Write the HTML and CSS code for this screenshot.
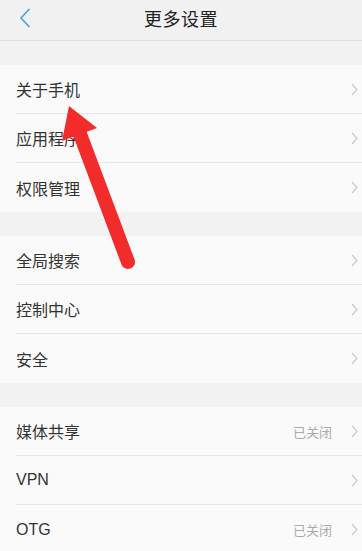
FILE: index.html
```html
<!DOCTYPE html>
<html lang="zh-CN">
<head>
    <meta charset="UTF-8">
    <meta name="viewport" content="width=device-width, initial-scale=1.0">
    <title>更多设置</title>
    <link rel="stylesheet" href="styles.css">
</head>
<body>
    <div class="page">
        <div class="header">
            <svg class="back" width="12" height="20" viewBox="0 0 12 20">
                <path d="M10.5 1 L2 10 L10.5 19" fill="none" stroke="#4f9fe3" stroke-width="1.6"/>
            </svg>
            <div class="title">更多设置</div>
        </div>

        <div class="group">
            <div class="row"><span class="label">关于手机</span><svg class="chevron" width="7" height="13" viewBox="0 0 7 13"><path d="M1 1 L6 6.5 L1 12" fill="none" stroke="#c9c9c9" stroke-width="1.2"/></svg></div>
            <div class="row"><span class="label">应用程序</span><svg class="chevron" width="7" height="13" viewBox="0 0 7 13"><path d="M1 1 L6 6.5 L1 12" fill="none" stroke="#c9c9c9" stroke-width="1.2"/></svg></div>
            <div class="row"><span class="label">权限管理</span><svg class="chevron" width="7" height="13" viewBox="0 0 7 13"><path d="M1 1 L6 6.5 L1 12" fill="none" stroke="#c9c9c9" stroke-width="1.2"/></svg></div>
        </div>

        <div class="group">
            <div class="row"><span class="label">全局搜索</span><svg class="chevron" width="7" height="13" viewBox="0 0 7 13"><path d="M1 1 L6 6.5 L1 12" fill="none" stroke="#c9c9c9" stroke-width="1.2"/></svg></div>
            <div class="row"><span class="label">控制中心</span><svg class="chevron" width="7" height="13" viewBox="0 0 7 13"><path d="M1 1 L6 6.5 L1 12" fill="none" stroke="#c9c9c9" stroke-width="1.2"/></svg></div>
            <div class="row"><span class="label">安全</span><svg class="chevron" width="7" height="13" viewBox="0 0 7 13"><path d="M1 1 L6 6.5 L1 12" fill="none" stroke="#c9c9c9" stroke-width="1.2"/></svg></div>
        </div>

        <div class="group">
            <div class="row"><span class="label">媒体共享</span><span class="value">已关闭</span><svg class="chevron" width="7" height="13" viewBox="0 0 7 13"><path d="M1 1 L6 6.5 L1 12" fill="none" stroke="#c9c9c9" stroke-width="1.2"/></svg></div>
            <div class="row"><span class="label latin">VPN</span><svg class="chevron" width="7" height="13" viewBox="0 0 7 13"><path d="M1 1 L6 6.5 L1 12" fill="none" stroke="#c9c9c9" stroke-width="1.2"/></svg></div>
            <div class="row"><span class="label latin">OTG</span><span class="value">已关闭</span><svg class="chevron" width="7" height="13" viewBox="0 0 7 13"><path d="M1 1 L6 6.5 L1 12" fill="none" stroke="#c9c9c9" stroke-width="1.2"/></svg></div>
        </div>

        <!-- red pointer drawn over the list -->
        <svg class="pointer" width="362" height="551" viewBox="0 0 362 551">
            <line x1="80" y1="134" x2="128" y2="262" stroke="#f22b2b" stroke-width="14" stroke-linecap="round"/>
            <polygon points="69,106 97,128 62,141" fill="#f22b2b"/>
        </svg>
    </div>
</body>
</html>
```

FILE: styles.css
```css
* {
    margin: 0;
    padding: 0;
    box-sizing: border-box;
}

body {
    background: #f2f2f2;
    font-family: "Noto Sans CJK SC", "Liberation Sans", sans-serif;
    overflow: hidden;
}

.page {
    position: relative;
    width: 362px;
    height: 551px;
    overflow: hidden;
}

.header {
    height: 41px;
    padding-bottom: 5px;
    background: #f1f1f1;
    border-bottom: 1px solid #dedede;
    display: flex;
    align-items: center;
    justify-content: center;
    position: relative;
}

.back {
    position: absolute;
    left: 19px;
    top: 8px;
}

.title {
    font-size: 18px;
    color: #222;
    letter-spacing: 0.5px;
}

.group {
    margin-top: 24px;
    background: #fafafa;
}

.row {
    height: 49px;
    margin-left: 16px;
    padding-right: 4px;
    display: flex;
    align-items: center;
    border-bottom: 1px solid #e6e6e6;
}

.row:last-child {
    border-bottom: none;
}

.label {
    flex: 1;
    font-size: 16px;
    color: #333;
}

.label.latin {
    font-family: "Liberation Sans", sans-serif;
    font-size: 16px;
}

.value {
    font-size: 13px;
    color: #aaa;
    margin-right: 19px;
}

.chevron {
    display: block;
}

.pointer {
    position: absolute;
    left: 0;
    top: 0;
}
```
